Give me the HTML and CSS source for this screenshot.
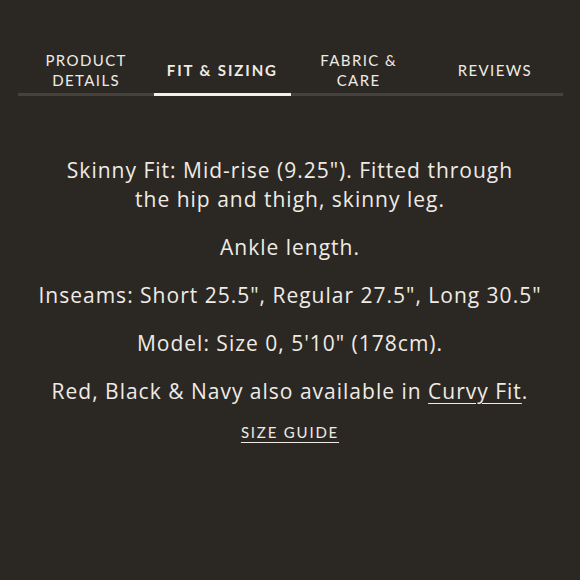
FILE: index.html
```html
<!DOCTYPE html>
<html>
<head>
<meta charset="utf-8">
<link rel="stylesheet" href="styles.css">
</head>
<body>
<div class="page">
  <nav class="tabs">
    <div class="tab">Product<br>Details</div>
    <div class="tab active">Fit &amp; Sizing</div>
    <div class="tab">Fabric &amp;<br>Care</div>
    <div class="tab">Reviews</div>
  </nav>
  <section class="content">
    <p class="lead">Skinny Fit: Mid-rise (9.25"). Fitted through the hip and thigh, skinny leg.</p>
    <p>Ankle length.</p>
    <p>Inseams: Short 25.5", Regular 27.5", Long 30.5"</p>
    <p>Model: Size 0, 5'10" (178cm).</p>
    <p>Red, Black &amp; Navy also available in <a href="#">Curvy Fit</a>.</p>
    <a class="guide" href="#">Size Guide</a>
  </section>
</div>
</body>
</html>
```
FILE: styles.css
```css
html, body {
  margin: 0;
  padding: 0;
  background: #2b2824;
}
.page {
  width: 580px;
  height: 580px;
  color: #efebe4;
  font-family: Lato, "Open Sans", sans-serif;
}
.tabs {
  display: grid;
  grid-template-columns: repeat(4, 1fr);
  margin: 0 17px 0 18px;
  padding-top: 47px;
}
.tab {
  height: 46px;
  display: flex;
  align-items: center;
  justify-content: center;
  text-align: center;
  text-transform: uppercase;
  font-size: 15px;
  line-height: 20px;
  letter-spacing: 1.4px;
  border-bottom: 3px solid #45423e;
}
.tab.active {
  font-weight: 700;
  letter-spacing: 1.9px;
  border-bottom-color: #f3f0ea;
}
.content {
  display: flex;
  flex-direction: column;
  align-items: center;
  text-align: center;
  padding: 0 38px;
  margin-top: 60px;
  font-family: "Open Sans", sans-serif;
}
.content p {
  margin: 0 0 19px;
  font-size: 21px;
  line-height: 29px;
  letter-spacing: 1px;
}
.content p.lead {
  max-width: 480px;
}
.content a {
  color: inherit;
  text-decoration: underline;
  text-underline-offset: 4px;
  text-decoration-thickness: 1px;
}
.content a.guide {
  font-family: Lato, sans-serif;
  font-size: 15px;
  letter-spacing: 1.8px;
  text-transform: uppercase;
  margin-top: -2px;
}
```
